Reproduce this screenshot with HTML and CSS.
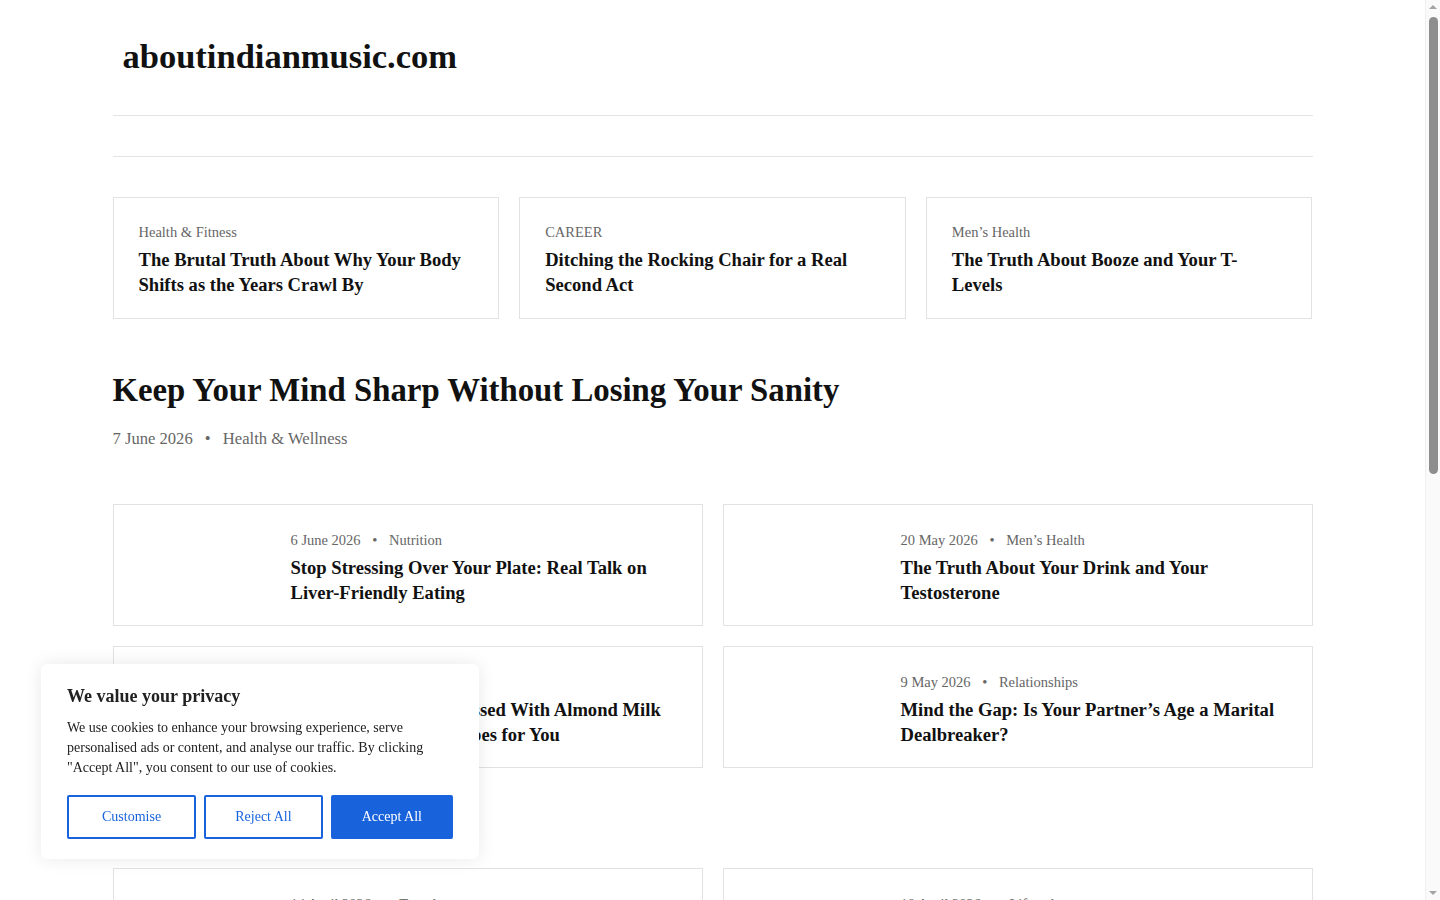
FILE: index.html
```html
<!DOCTYPE html>
<html lang="en">
<head>
    <meta charset="UTF-8">
    <meta name="viewport" content="width=device-width, initial-scale=1.0">
    <title>aboutindianmusic.com</title>
    <link rel="stylesheet" href="styles.css">
</head>
<body>
    <div class="container">
        <header class="site-header">
            <a class="logo" href="#">aboutindianmusic.com</a>
        </header>
        <nav class="main-nav"></nav>

        <!-- Featured strip -->
        <section class="featured">
            <article class="feat-card">
                <div class="cat">Health &amp; Fitness</div>
                <h3>The Brutal Truth About Why Your Body Shifts as the Years Crawl By</h3>
            </article>
            <article class="feat-card">
                <div class="cat">CAREER</div>
                <h3>Ditching the Rocking Chair for a Real Second Act</h3>
            </article>
            <article class="feat-card">
                <div class="cat">Men’s Health</div>
                <h3>The Truth About Booze and Your T-Levels</h3>
            </article>
        </section>

        <!-- Lead post -->
        <section class="lead">
            <h1>Keep Your Mind Sharp Without Losing Your Sanity</h1>
            <div class="meta big">7 June 2026 <span class="dot">•</span> Health &amp; Wellness</div>
        </section>

        <!-- Post list -->
        <section class="posts">
            <article class="post">
                <div class="thumb"></div>
                <div class="post-body">
                    <div class="meta">6 June 2026 <span class="dot">•</span> Nutrition</div>
                    <h3>Stop Stressing Over Your Plate: Real Talk on Liver-Friendly Eating</h3>
                </div>
            </article>
            <article class="post">
                <div class="thumb"></div>
                <div class="post-body">
                    <div class="meta">20 May 2026 <span class="dot">•</span> Men’s Health</div>
                    <h3>The Truth About Your Drink and Your Testosterone</h3>
                </div>
            </article>
            <article class="post">
                <div class="thumb"></div>
                <div class="post-body">
                    <div class="meta">14 May 2026 <span class="dot">•</span> Nutrition</div>
                    <h3>Why Everyone Is Obsessed With Almond Milk and Three Simple Recipes for You</h3>
                </div>
            </article>
            <article class="post">
                <div class="thumb"></div>
                <div class="post-body">
                    <div class="meta">9 May 2026 <span class="dot">•</span> Relationships</div>
                    <h3>Mind the Gap: Is Your Partner’s Age a Marital Dealbreaker?</h3>
                </div>
            </article>
        </section>

        <section class="posts more">
            <article class="post">
                <div class="thumb"></div>
                <div class="post-body">
                    <div class="meta">14 April 2026 <span class="dot">•</span> Travel</div>
                    <h3>Packing Light Without Losing Your Mind on the Road</h3>
                </div>
            </article>
            <article class="post">
                <div class="thumb"></div>
                <div class="post-body">
                    <div class="meta">10 April 2026 <span class="dot">•</span> Lifestyle</div>
                    <h3>Small Daily Habits That Quietly Change Everything</h3>
                </div>
            </article>
            <article class="post">
                <div class="thumb"></div>
                <div class="post-body">
                    <div class="meta">2 April 2026 <span class="dot">•</span> Health &amp; Fitness</div>
                    <h3>Walking Versus Running: Which One Actually Wins?</h3>
                </div>
            </article>
            <article class="post">
                <div class="thumb"></div>
                <div class="post-body">
                    <div class="meta">28 March 2026 <span class="dot">•</span> CAREER</div>
                    <h3>How to Ask for a Raise Without Sweating Through Your Shirt</h3>
                </div>
            </article>
        </section>

        <footer class="site-footer">© 2026 aboutindianmusic.com</footer>
    </div>

    <!-- Cookie consent -->
    <div class="cookie">
        <h4>We value your privacy</h4>
        <p>We use cookies to enhance your browsing experience, serve personalised ads or content, and analyse our traffic. By clicking "Accept All", you consent to our use of cookies.</p>
        <div class="cookie-btns">
            <button class="cbtn">Customise</button>
            <button class="cbtn">Reject All</button>
            <button class="cbtn accept">Accept All</button>
        </div>
    </div>

    <!-- window scrollbar -->
    <div class="scrollbar" aria-hidden="true">
        <span class="arrow up"></span>
        <span class="thumb-bar"></span>
        <span class="arrow down"></span>
    </div>
</body>
</html>
```

FILE: styles.css
```css
body {
    font-family: "Liberation Serif", serif;
    margin: 0;
    padding: 0 15px 0 0;
    background: #fff;
    color: #111;
}
.container {
    width: 1200px;
    margin: 0 auto;
}
.site-header {
    height: 115px;
    display: flex;
    align-items: center;
    padding-left: 10px;
    border-bottom: 1px solid #e4e4e4;
}
.logo {
    font-size: 34.5px;
    font-weight: bold;
    color: #111;
    text-decoration: none;
    margin-top: -2px;
}
.main-nav {
    height: 40px;
    border-bottom: 1px solid #e4e4e4;
}
.featured {
    display: grid;
    grid-template-columns: repeat(3, 1fr);
    gap: 20px;
    margin-top: 40px;
}
.feat-card {
    border: 1px solid #e2e2e2;
    padding: 24px 25px 21px;
}
.cat {
    font-size: 14.5px;
    line-height: 20px;
    color: #666;
}
.feat-card h3, .post h3 {
    font-size: 18.6px;
    line-height: 25px;
    font-weight: bold;
    margin: 5px 0 0;
}
.lead h1 {
    font-size: 32.8px;
    line-height: 42px;
    margin: 50px 0 0;
}
.meta {
    font-size: 14.5px;
    line-height: 20px;
    color: #666;
}
.meta.big {
    font-size: 16.6px;
    margin-top: 18px;
}
.dot {
    margin: 0 8px;
}
.posts {
    display: grid;
    grid-template-columns: 1fr 1fr;
    gap: 20px;
    margin-top: 55px;
}
.posts.more {
    margin-top: 100px;
}
.post {
    border: 1px solid #e2e2e2;
    padding: 25px 25px 20px;
    display: flex;
    gap: 25px;
}
.thumb {
    width: 127px;
    flex-shrink: 0;
}
.site-footer {
    margin: 80px 0 0;
    padding: 40px 0 300px;
    border-top: 1px solid #e4e4e4;
    color: #666;
    font-size: 14px;
}
.cookie {
    position: fixed;
    left: 41px;
    bottom: 41px;
    width: 386px;
    padding: 20px 26px;
    background: #fff;
    border-radius: 6px;
    box-shadow: 0 0 18px rgba(0, 0, 0, 0.09);
}
.cookie h4 {
    font-size: 18px;
    line-height: 24px;
    margin: 0;
    color: #212121;
}
.cookie p {
    font-size: 14px;
    line-height: 20px;
    margin: 10px 0 0;
    color: #212121;
}
.cookie-btns {
    display: flex;
    gap: 8px;
    margin-top: 17px;
}
.cbtn {
    flex: 1 1 auto;
    font-family: inherit;
    font-size: 14px;
    height: 44px;
    padding: 0 8px;
    white-space: nowrap;
    background: #fff;
    color: #1863dc;
    border: 2px solid #1863dc;
    border-radius: 2px;
    cursor: pointer;
}
.cbtn:first-child {
    padding: 0 12px;
}
.cbtn.accept {
    background: #1863dc;
    color: #fff;
}
.scrollbar {
    position: fixed;
    top: 0;
    right: 0;
    width: 15px;
    height: 100%;
    background: #fafafa;
    border-left: 1px solid #f0f0f0;
    box-sizing: border-box;
    display: flex;
    flex-direction: column;
    align-items: center;
}
.arrow {
    width: 0;
    height: 0;
    border-left: 4px solid transparent;
    border-right: 4px solid transparent;
}
.arrow.up {
    border-bottom: 4px solid #a3a3a3;
    margin-top: 5px;
}
.arrow.down {
    border-top: 4px solid #a3a3a3;
    margin-top: auto;
    margin-bottom: 5px;
}
.thumb-bar {
    width: 9px;
    height: 457px;
    margin-top: 8px;
    background: #8e8e8e;
    border-radius: 5px;
}
```
